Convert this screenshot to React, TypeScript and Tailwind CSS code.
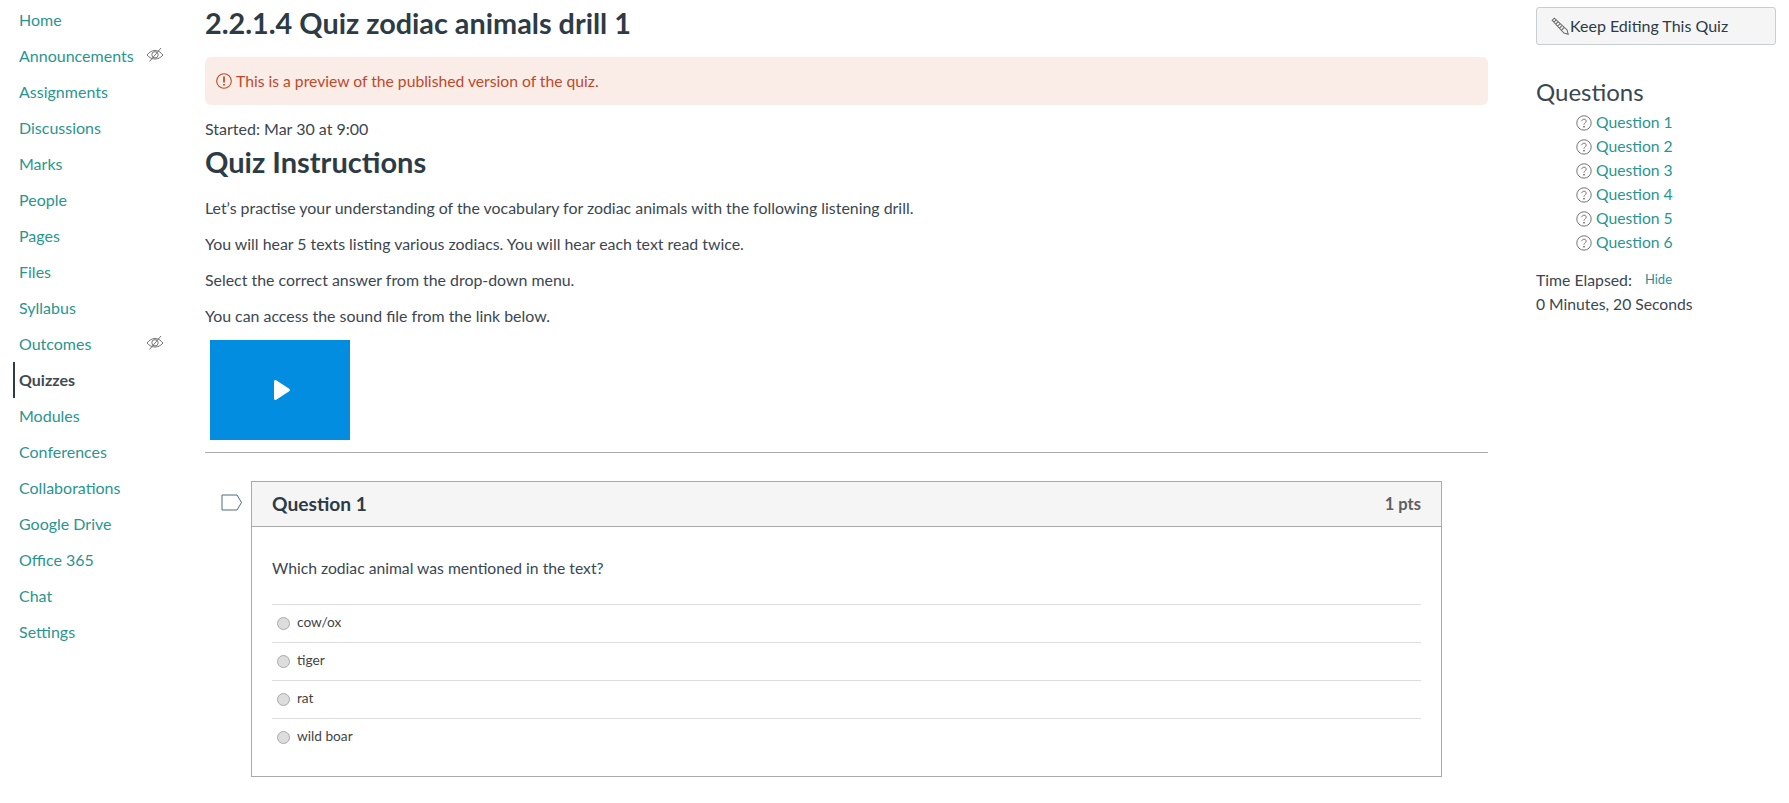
const navItems = [
  { label: 'Home' },
  { label: 'Announcements', hidden: true },
  { label: 'Assignments' },
  { label: 'Discussions' },
  { label: 'Marks' },
  { label: 'People' },
  { label: 'Pages' },
  { label: 'Files' },
  { label: 'Syllabus' },
  { label: 'Outcomes', hidden: true },
  { label: 'Quizzes', active: true },
  { label: 'Modules' },
  { label: 'Conferences' },
  { label: 'Collaborations' },
  { label: 'Google Drive' },
  { label: 'Office 365' },
  { label: 'Chat' },
  { label: 'Settings' },
]

const instructions = [
  'Let’s practise your understanding of the vocabulary for zodiac animals with the following listening drill.',
  'You will hear 5 texts listing various zodiacs. You will hear each text read twice.',
  'Select the correct answer from the drop-down menu.',
  'You can access the sound file from the link below.',
]

const answers = ['cow/ox', 'tiger', 'rat', 'wild boar']

function EyeOff() {
  return (
    <svg viewBox="0 0 18 16" className="h-[16px] w-[18px] text-[#666]" fill="none" stroke="currentColor" strokeWidth="0.9">
      <path d="M1 8C3.500 5 6 3.500 9 3.500S14.500 5 17 8c-2.500 2.800-5 4-8 4s-5.500-1.200-8-4z" />
      <circle cx="9" cy="7.800" r="3.200" />
      <path d="M3.500 14.500 15 1" />
    </svg>
  )
}

function QuestionIcon() {
  return (
    <svg viewBox="0 0 16 16" className="h-4 w-4 text-[#666]" fill="none" stroke="currentColor" strokeWidth="0.9">
      <circle cx="8" cy="8" r="7.200" />
      <path d="M5.800 6.200C5.900 4.900 6.800 4.200 8 4.200c1.300 0 2.200.8 2.200 1.900 0 1.700-2.200 1.700-2.200 3.600" />
      <circle cx="8" cy="11.700" r="0.500" fill="currentColor" />
    </svg>
  )
}

function Sidebar() {
  return (
    <nav className="w-[205px] shrink-0 pl-[13px] pt-[2px]">
      {navItems.map((item) => (
        <div
          key={item.label}
          className={`flex h-9 w-[152px] items-center justify-between border-l-2 pl-1 text-[16px] ${
            item.active ? 'border-[#2d3b45] font-bold text-[#3f4a52]' : 'border-transparent text-[#2a9590]'
          }`}
        >
          <span>{item.label}</span>
          {item.hidden && (
            <span className="-mt-[3px] mr-[1px]">
              <EyeOff />
            </span>
          )}
        </div>
      ))}
    </nav>
  )
}

function QuestionCard() {
  return (
    <div className="ml-[16px] mt-7 flex items-start">
      <svg viewBox="0 0 22 17" className="mr-[8px] mt-[13px] h-[17px] w-[22px] shrink-0 text-[#4a6b85]" fill="none" stroke="currentColor" strokeWidth="1">
        <path d="M1 1h15l4.500 7.500-4.500 7.500H1z" />
      </svg>
      <div className="w-[1191px] border border-[#aaa]">
        <div className="flex h-[45px] items-center justify-between border-b border-[#aaa] bg-[#f5f5f5] px-5">
          <span className="text-[19.200px] font-bold text-[#2d3b45]">Question 1</span>
          <span className="text-[16.500px] font-bold text-[#5f5f5f]">1 pts</span>
        </div>
        <div className="px-5 pt-[29px] pb-[20px]">
          <p className="mb-[24px] h-[24px] text-[15.700px] leading-[24px]">Which zodiac animal was mentioned in the text?</p>
          {answers.map((a) => (
            <div key={a} className="flex h-[38px] items-center border-t border-[#ddd] pl-[5px] text-[13.700px] text-[#444]">
              <span className="mr-[7px] h-[13px] w-[13px] rounded-full border border-[#aaa] bg-[#ddd]" />
              <span className="-mt-[2px]">{a}</span>
            </div>
          ))}
        </div>
      </div>
    </div>
  )
}

function MainColumn() {
  return (
    <main className="w-[1283px] shrink-0">
      <h1 className="mt-[5px] text-[28.800px] leading-[36px] font-bold text-[#2d3b45]">2.2.1.4 Quiz zodiac animals drill 1</h1>
      <div className="mt-[16px] flex h-[48px] items-center rounded-md bg-[#faece7] pl-[11px] text-[15.700px] text-[#c0492a]">
        <svg viewBox="0 0 16 16" className="mr-[4px] h-4 w-4" fill="none" stroke="currentColor" strokeWidth="1.100">
          <circle cx="8" cy="8" r="7.300" />
          <path d="M8 3.500v6M8 11v1.500" strokeWidth="1.800" />
        </svg>
        <span className="mt-[1px]">This is a preview of the published version of the quiz.</span>
      </div>
      <p className="mt-[13px] text-[16px] leading-[22px]">Started: Mar 30 at 9:00</p>
      <h2 className="mt-[4px] text-[29px] leading-[36px] font-bold text-[#2d3b45]">Quiz Instructions</h2>
      <div className="mt-[16px] flex flex-col gap-3 text-[15.900px] leading-[24px]">
        {instructions.map((t) => (
          <p key={t}>{t}</p>
        ))}
      </div>
      <div className="ml-[5px] mt-[12px] flex h-[100px] w-[140px] items-center justify-center bg-[#028de0]">
        <svg viewBox="0 0 16 20" className="ml-[3px] h-5 w-4 fill-white">
          <path d="M0 1.500C0 .2 1.200-.4 2.200.3l13 8.400c.9.6.9 2 0 2.600l-13 8.400C1.200 20.400 0 19.800 0 18.500z" />
        </svg>
      </div>
      <hr className="mt-3 border-t border-[#aaa]" />
      <QuestionCard />
    </main>
  )
}

function RightColumn() {
  return (
    <aside className="ml-[48px] w-[240px] shrink-0 pt-[7px]">
      <button className="flex h-[38px] w-full items-center rounded-[3px] border border-[#c7cdd1] bg-[#f5f5f5] pl-[14px] text-[16px] text-[#2d3b45]">
        <svg viewBox="0 0 16 16" className="mr-[1px] h-[18px] w-[18px] text-[#666]" fill="none" stroke="currentColor" strokeWidth="0.9">
          <path d="M1 3 3 1l11.300 10.500 1 3.800-3.800-1zM2.500 4.700l2.200-2.200M4.200 6.300l2.200-2.200M6 8l2.200-2.200M7.800 9.700 10 7.500M9.600 11.400l2.200-2.200" />
        </svg>
        Keep Editing This Quiz
      </button>
      <h2 className="mt-[30px] text-[24px] leading-[34px] font-normal text-[#3a4750]">Questions</h2>
      <ul className="ml-10 mt-[2px]">
        {[1, 2, 3, 4, 5, 6].map((n) => (
          <li key={n} className="flex h-6 items-center gap-[4px] text-[15.700px] text-[#2a9590]">
            <QuestionIcon />
            Question {n}
          </li>
        ))}
      </ul>
      <div className="mt-[13px] flex h-6 items-center text-[15.800px]">
        Time Elapsed:
        <span className="ml-[13px] text-[13px] text-[#2a8f9a]">Hide</span>
      </div>
      <p className="text-[15.700px] leading-6">0 Minutes, 20 Seconds</p>
    </aside>
  )
}

export default function App() {
  return (
    <div className="flex h-[803px] w-[1789px] overflow-hidden bg-white font-['Lato','Open_Sans',sans-serif] text-[#3b4650]">
      <Sidebar />
      <MainColumn />
      <RightColumn />
    </div>
  )
}
